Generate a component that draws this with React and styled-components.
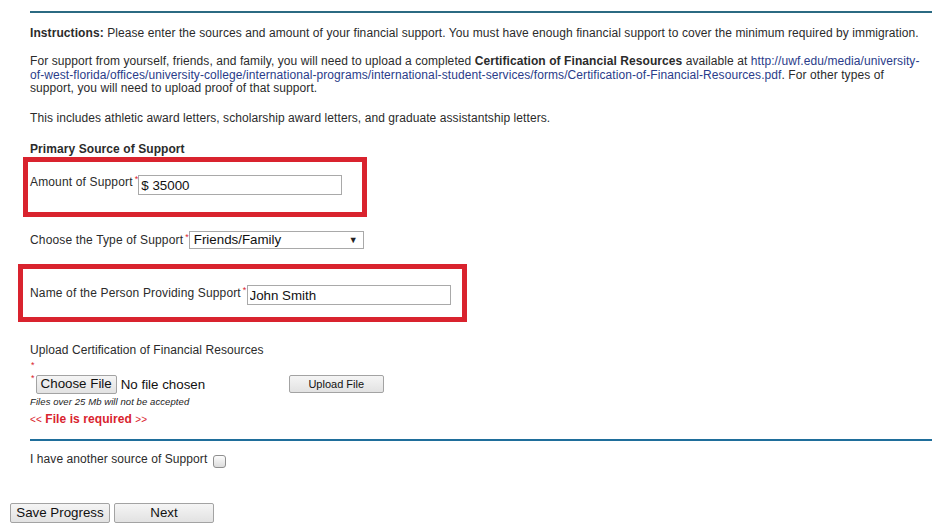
import React from "react";
import styled, { createGlobalStyle } from "styled-components";

const GlobalStyle = createGlobalStyle`
  html, body { margin: 0; padding: 0; background: #fff; }
  body {
    font-family: "Liberation Sans", Arial, sans-serif;
    font-size: 12px;
    letter-spacing: 0.08px;
    color: #2b2b2b;
  }
`;

const Page = styled.div`
  padding: 11px 10px 0 10px;
  width: 946px;
  box-sizing: border-box;
`;

const Content = styled.div`
  margin-left: 20px;
  width: 902px;
  box-sizing: border-box;
`;

const Section = styled.section`
  border-top: 2px solid ${(p) => p.$color};
  padding-top: ${(p) => p.$pt}px;
  margin-top: ${(p) => p.$mt || 0}px;
`;

const Para = styled.p`
  margin: ${(p) => p.$top}px 0 0 0;
  max-width: 892px;
  line-height: ${(p) => p.$lh || 14}px;
`;

const Link = styled.span`
  color: #2a3c8a;
`;

const Heading = styled.div`
  margin-top: 17px;
  font-weight: bold;
  line-height: 14px;
`;

const FieldRow = styled.div`
  position: relative;
  display: flex;
  align-items: flex-start;
  margin-top: ${(p) => p.$top}px;
`;

const Highlight = styled.div`
  position: absolute;
  border: 5px solid #d9232e;
  pointer-events: none;
  left: ${(p) => p.$l}px;
  top: ${(p) => p.$t}px;
  width: ${(p) => p.$w}px;
  height: ${(p) => p.$h}px;
  box-sizing: border-box;
`;

const Label = styled.label`
  line-height: 14px;
  letter-spacing: 0.15px;
  padding-top: ${(p) => p.$pt || 0}px;
  white-space: nowrap;
`;

const Req = styled.sup`
  color: #d9232e;
  font-size: 9px;
  vertical-align: top;
  line-height: 9px;
  margin-left: 2px;
`;

const TextInput = styled.input`
  box-sizing: border-box;
  width: ${(p) => p.$w}px;
  height: 20px;
  border: 1px solid #a9a9a9;
  padding: 1px 2px 0 2px;
  margin: 0;
  font-family: "Liberation Sans", Arial, sans-serif;
  font-size: 13.33px;
  color: #111;
  background: #fff;
  outline: none;
`;

const SelectWrap = styled.div`
  position: relative;
  width: 175px;
  height: 18px;
  margin-top: -1px;
`;

const Select = styled.select`
  appearance: none;
  -webkit-appearance: none;
  box-sizing: border-box;
  width: 175px;
  height: 18px;
  border: 1px solid #a9a9a9;
  border-radius: 0;
  background: #fff;
  padding: 0 0 0 4px;
  margin: 0;
  font-family: "Liberation Sans", Arial, sans-serif;
  font-size: 13.33px;
  color: #111;
  outline: none;
`;

const Arrow = styled.span`
  position: absolute;
  right: 6px;
  top: 3px;
  font-size: 9px;
  line-height: 12px;
  color: #222;
  pointer-events: none;
`;

const UploadLabel = styled.div`
  margin-top: 38px;
  line-height: 14px;
`;

const LoneReq = styled.div`
  color: #d9232e;
  font-size: 9px;
  line-height: 10px;
  margin-top: 3px;
  padding-left: 1px;
`;

const FileRow = styled.div`
  display: flex;
  align-items: center;
  margin-top: 5px;
  height: 19px;
`;

const FileReq = styled.span`
  color: #d9232e;
  font-size: 9px;
  align-self: flex-start;
  line-height: 9px;
  margin: -1px 0 0 1px;
`;

const Button = styled.button`
  box-sizing: border-box;
  width: ${(p) => (p.$w ? `${p.$w}px` : "auto")};
  height: ${(p) => p.$h || 20}px;
  padding: 0 ${(p) => p.$px ?? 0}px;
  margin: ${(p) => p.$m || 0};
  border: 1px solid #a3a3a3;
  border-radius: 2px;
  background: linear-gradient(#f5f5f5, #e2e2e2);
  font-family: "Liberation Sans", Arial, sans-serif;
  font-size: ${(p) => p.$fs || 13.33}px;
  letter-spacing: 0;
  white-space: nowrap;
  color: #111;
  line-height: 1;
  cursor: pointer;
`;

const NoFile = styled.span`
  font-size: 13.33px;
  letter-spacing: 0;
  margin-left: 4px;
  width: 168px;
  color: #111;
`;

const Note = styled.div`
  margin-top: 2px;
  font-size: 9.5px;
  font-style: italic;
  line-height: 12px;
  color: #222;
`;

const ErrorLine = styled.div`
  margin-top: 4px;
  color: #d9232e;
  line-height: 14px;
  font-weight: bold;
`;

const Chevrons = styled.span`
  font-weight: normal;
  font-size: 10px;
`;

const CheckRow = styled.div`
  display: flex;
  align-items: center;
  line-height: 14px;
`;

const Checkbox = styled.span`
  display: inline-block;
  box-sizing: border-box;
  width: 13px;
  height: 13px;
  margin: 4px 0 0 6px;
  border: 1px solid #8f8f8f;
  border-radius: 3px;
  background: linear-gradient(#fcfcfc, #dcdcdc);
`;

const Actions = styled.div`
  display: flex;
  gap: 4px;
  margin-top: 35px;
`;

export default function App() {
  return (
    <>
      <GlobalStyle />
      <Page>
        <Content>
          <Section $color="#2b6a82" $pt={13}>
            <Para $top={0}>
              <b>Instructions:</b> Please enter the sources and amount of your financial support. You must have enough
              financial support to cover the minimum required by immigration.
            </Para>
            <Para $top={15} $lh={13.5}>
              For support from yourself, friends, and family, you will need to upload a completed{" "}
              <b>Certification of Financial Resources</b> available at{" "}
              <Link>
                http://uwf.edu/media/university-of-west-florida/offices/university-college/international-programs/international-student-services/forms/Certification-of-Financial-Resources.pdf
              </Link>
              . For other types of support, you will need to upload proof of that support.
            </Para>
            <Para $top={15}>
              This includes athletic award letters, scholarship award letters, and graduate assistantship letters.
            </Para>
            <Heading>Primary Source of Support</Heading>

            <FieldRow $top={19}>
              <Highlight $l={-7} $t={-18} $w={344} $h={60} />
              <Label>
                Amount of Support<Req>*</Req>
              </Label>
              <TextInput $w={204} defaultValue="$ 35000" />
            </FieldRow>

            <FieldRow $top={37}>
              <Label $pt={1}>
                Choose the Type of Support<Req>*</Req>
              </Label>
              <SelectWrap>
                <Select defaultValue="ff">
                  <option value="ff">Friends/Family</option>
                  <option value="self">Self</option>
                </Select>
                <Arrow>▼</Arrow>
              </SelectWrap>
            </FieldRow>

            <FieldRow $top={36}>
              <Highlight $l={-12} $t={-21} $w={449} $h={58} />
              <Label $pt={1}>
                Name of the Person Providing Support<Req>*</Req>
              </Label>
              <TextInput $w={204} defaultValue="John Smith" />
            </FieldRow>

            <UploadLabel>Upload Certification of Financial Resources</UploadLabel>
            <LoneReq>*</LoneReq>
            <FileRow>
              <FileReq>*</FileReq>
              <Button $h={19} $px={4} $m="0 0 0 1px">Choose File</Button>
              <NoFile>No file chosen</NoFile>
              <Button $w={95} $h={18} $fs={11}>Upload File</Button>
            </FileRow>
            <Note>Files over 25 Mb will not be accepted</Note>
            <ErrorLine>
              <Chevrons>&lt;&lt;</Chevrons> File is required <Chevrons>&gt;&gt;</Chevrons>
            </ErrorLine>
          </Section>

          <Section $color="#1f6e9b" $pt={10} $mt={12}>
            <CheckRow>
              I have another source of Support
              <Checkbox />
            </CheckRow>
          </Section>
        </Content>
        <Actions>
          <Button $w={100}>Save Progress</Button>
          <Button $w={100}>Next</Button>
        </Actions>
      </Page>
    </>
  );
}
